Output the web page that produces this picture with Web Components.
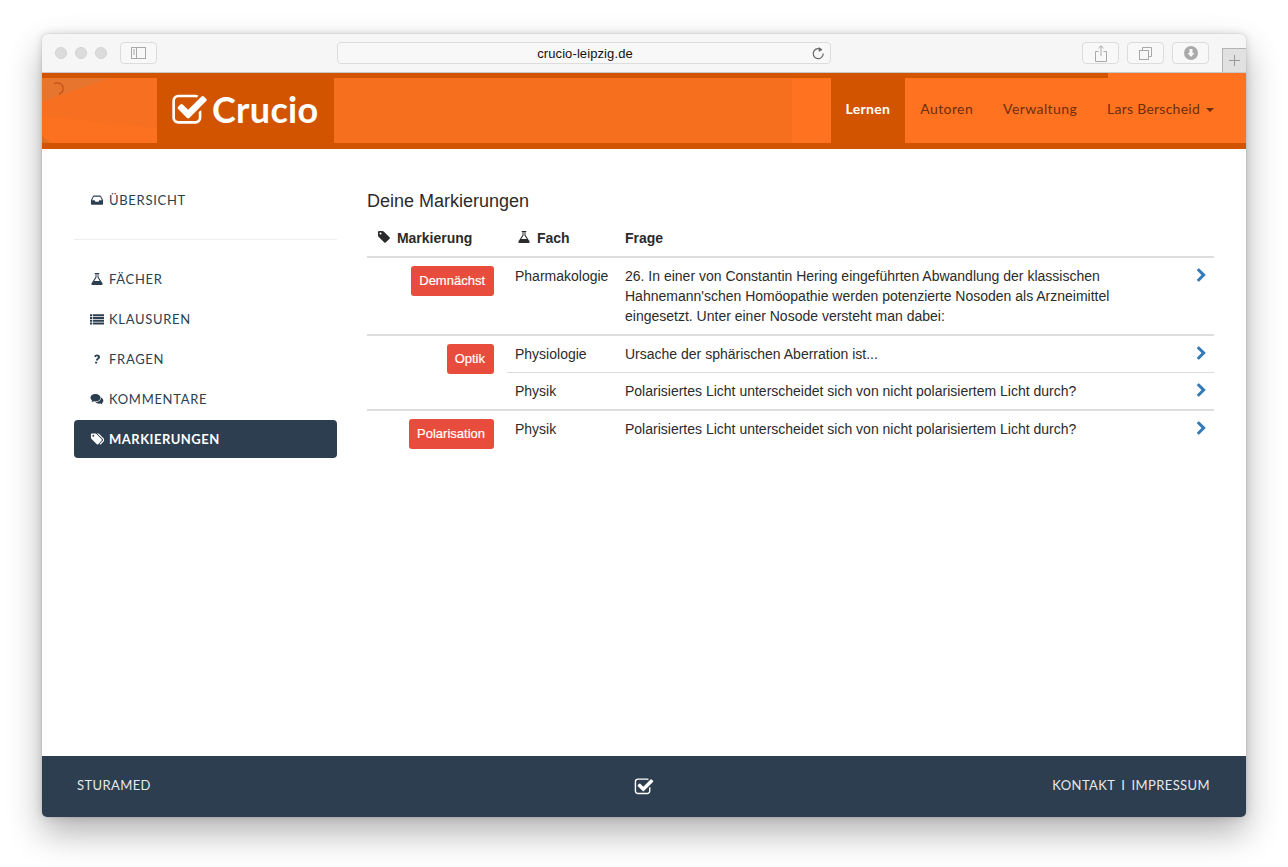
<!DOCTYPE html>
<html lang="de">
<head>
<meta charset="utf-8">
<title>Crucio</title>
<style>
html, body { margin: 0; background: #fff; }
body { padding: 34px 42px 50px; font-family: "Liberation Sans", Arial, sans-serif; }
</style>
</head>
<body>
<app-window>
    <browser-bar slot="bar">crucio-leipzig.de</browser-bar>
    <site-header slot="header"></site-header>
    <side-nav slot="side">
        <nav-item icon="inbox">Übersicht</nav-item>
        <nav-item divider></nav-item>
        <nav-item icon="flask">Fächer</nav-item>
        <nav-item icon="list">Klausuren</nav-item>
        <nav-item icon="question">Fragen</nav-item>
        <nav-item icon="comments">Kommentare</nav-item>
        <nav-item icon="tags" active>Markierungen</nav-item>
    </side-nav>
    <marks-table slot="main"></marks-table>
    <site-footer slot="footer"></site-footer>
</app-window>

<script>
const ICONS = {
    check: [1792, "M1472 930v318q0 119-84.5 203.5t-203.5 84.5h-832q-119 0-203.5-84.5t-84.5-203.5v-832q0-119 84.5-203.5t203.5-84.5h832q63 0 117 25 15 7 18 23 3 17-9 29l-49 49q-10 10-23 10-3 0-9-2-23-6-45-6h-832q-66 0-113 47t-47 113v832q0 66 47 113t113 47h832q66 0 113-47t47-113v-254q0-13 9-22l64-64q10-10 23-10 6 0 12 3 20 8 20 29zm231-489l-814 814q-24 24-57 24t-57-24l-430-430q-24-24-24-57t24-57l110-110q24-24 57-24t57 24l263 263 647-647q24-24 57-24t57 24l110 110q24 24 24 57t-24 57z"],
    chevron: [1792, "M1363 877l-742 742q-19 19-45 19t-45-19l-166-166q-19-19-19-45t19-45l531-531-531-531q-19-19-19-45t19-45l166-166q19-19 45-19t45 19l742 742q19 19 19 45t-19 45z"],
    tag: [1792, "M576 448q0-53-37.5-90.5t-90.5-37.5-90.5 37.5-37.5 90.5 37.5 90.5 90.5 37.5 90.5-37.5 37.5-90.5zm1067 576q0 53-37 90l-491 492q-39 37-91 37-53 0-90-37l-715-716q-38-37-64.5-101t-26.5-117v-416q0-52 38-90t90-38h416q53 0 117 26.5t102 64.5l715 714q37 39 37 91z"],
    tags: [1920, "M576 448q0-53-37.5-90.5t-90.5-37.5-90.5 37.5-37.5 90.5 37.5 90.5 90.5 37.5 90.5-37.5 37.5-90.5zm1067 576q0 53-37 90l-491 492q-39 37-91 37-53 0-90-37l-715-716q-38-37-64.5-101t-26.5-117v-416q0-52 38-90t90-38h416q53 0 117 26.5t102 64.5l715 714q37 39 37 91zm384 0q0 53-37 90l-491 492q-39 37-91 37-36 0-59-14t-53-45l470-470q37-37 37-90 0-52-37-91l-715-714q-38-38-102-64.5t-117-26.5h224q53 0 117 26.5t102 64.5l715 714q37 39 37 91z"],
    flask: [1792, "M1591 1448q56 89 21.5 152.5t-140.5 63.5h-1152q-106 0-140.5-63.5t21.5-152.5l503-793v-399h-64q-26 0-45-19t-19-45 19-45 45-19h512q26 0 45 19t19 45-19 45-45 19h-64v399zm-779-725l-272 429h712l-272-429-20-31v-437h-128v437z"],
    list: [1792, "M0 290h290v250h-290zM390 290h1402v250h-1402zM0 640h290v250h-290zM390 640h1402v250h-1402zM0 990h290v250h-290zM390 990h1402v250h-1402zM0 1340h290v250h-290zM390 1340h1402v250h-1402z"],
    inbox: [1792, "M480 320h832q60 0 90 50l262 520q8 20 8 60v416q0 60-44 104t-100 44h-1264q-56 0-100-44t-44-104v-416q0-40 8-60l262-520q30-50 90-50zm0 160l-216 448h336l96 192h400l96-192h336l-216-448z"],
    question: [1792, "M520 560q90-240 390-240 150 0 260 90t110 230q0 130-100 220l-110 90q-60 50-60 130h-240q0-150 100-240l90-80q50-50 50-110 0-60-40-90t-90-30q-110 0-150 130zM660 1240h260v240h-260z"],
    comments: [1792, "M704 256c-344 0-640 200-640 480 0 150 90 280 220 370-20 70-60 130-110 190 110-10 230-60 310-120 70 20 140 30 220 30 344 0 640-200 640-470s-296-480-640-480zM1400 700c40 310-290 560-690 590 90 130 270 210 470 210 50 0 100-10 150-20 70 60 180 110 290 120-40-50-80-110-100-170 120-80 190-200 190-320 0-180-130-330-310-410z"]
};

class FaIcon extends HTMLElement {
    connectedCallback() {
        const [w, d] = ICONS[this.getAttribute("name")];
        const size = this.getAttribute("size") || "14";
        const root = this.shadowRoot || this.attachShadow({ mode: "open" });
        root.innerHTML = `
<style>
:host { display: inline-flex; align-items: center; justify-content: center; }
svg { display: block; fill: currentColor; }
</style>
<svg width="${size * w / 1792}" height="${size}" viewBox="0 0 ${w} 1792"><path d="${d}"/></svg>`;
    }
}

class AppWindow extends HTMLElement {
    constructor() {
        super();
        this.attachShadow({ mode: "open" }).innerHTML = `
<style>
:host {
    display: flex;
    flex-direction: column;
    height: 783px;
    background: #fff;
    border-radius: 6px 6px 5px 5px;
    box-shadow: 0 16px 34px rgba(0,0,0,.3), 0 0 8px rgba(0,0,0,.14), 0 0 1px rgba(0,0,0,.4);
    overflow: hidden;
}
#body { flex: 1; display: flex; min-height: 0; }
#side { width: 263px; padding: 32px 0 0 32px; flex: none; }
#main { flex: 1; padding: 32px 32px 0 30px; min-width: 0; }
</style>
<slot name="bar"></slot>
<slot name="header"></slot>
<div id="body">
    <div id="side"><slot name="side"></slot></div>
    <div id="main"><slot name="main"></slot></div>
</div>
<slot name="footer"></slot>`;
    }
}

class BrowserBar extends HTMLElement {
    constructor() {
        super();
        this.attachShadow({ mode: "open" }).innerHTML = `
<style>
:host {
    display: flex;
    align-items: flex-start;
    position: relative;
    height: 38px;
    background: #f6f6f6;
    border-bottom: 1px solid #c9c9c9;
    box-sizing: content-box;
    font: 13px "Liberation Sans", Arial, sans-serif;
    letter-spacing: .1px;
    color: #111;
}
.dots { display: flex; gap: 8px; margin: 13px 0 0 13px; }
.dots i { width: 12px; height: 12px; border-radius: 50%; background: #dcdcdc; border: 1px solid #d2d2d2; box-sizing: border-box; }
.btn, .url {
    box-sizing: border-box;
    height: 22px;
    margin-top: 8px;
    border: 1px solid #dcdcdc;
    border-radius: 4px;
    background: #f8f8f8;
    display: flex;
    align-items: center;
    justify-content: center;
}
.btn { width: 37px; color: #a9a9a9; }
.side { margin-left: 13px; }
.url { width: 494px; margin-left: 180px; padding-left: 2px; position: relative; }
.url svg { position: absolute; right: 5px; top: 3px; }
.tools { display: flex; gap: 8px; margin-left: 251px; }
.plus {
    position: absolute;
    right: 0;
    bottom: 0;
    width: 24px;
    height: 24px;
    box-sizing: border-box;
    background: #e1e1e1;
    border: 1px solid #b4b4b4;
    border-width: 1px 0 0 1px;
    display: flex;
    align-items: center;
    justify-content: center;
}
svg { display: block; fill: none; stroke: currentColor; }
</style>
<div class="dots"><i></i><i></i><i></i></div>
<div class="btn side">
    <svg width="15" height="12" viewBox="0 0 15 12"><rect x=".5" y=".5" width="14" height="11"/><path d="M5.500 .5v11M2 3h2M2 5h2M2 7h2" stroke-width="1"/></svg>
</div>
<div class="url">
    <slot></slot>
    <svg width="14" height="15" viewBox="0 0 14 15" style="color:#666"><path d="M10.800 4.200a5 5 0 1 0 1.400 3.400" stroke-width="1.200"/><path d="M7.500 1l3.800 2.600-3.400 2.400z" fill="currentColor" stroke="none"/></svg>
</div>
<div class="tools">
    <div class="btn"><svg width="12" height="17" viewBox="0 0 12 17"><path d="M3.500 6.500h-3v10h11v-10h-3M6 11V1M3.500 3.200L6 .8l2.500 2.400"/></svg></div>
    <div class="btn"><svg width="13" height="13" viewBox="0 0 13 13"><rect x=".5" y="3.500" width="9" height="9"/><path d="M3.500 3V.5h9v9H10"/></svg></div>
    <div class="btn"><svg width="14" height="14" viewBox="0 0 14 14"><circle cx="7" cy="7" r="7" fill="currentColor" stroke="none"/><path d="M5.500 3h3v4h2L7 11 3.500 7h2z" fill="#f8f8f8" stroke="none"/></svg></div>
</div>
<div class="plus"><svg width="11" height="11" viewBox="0 0 11 11" style="color:#999"><path d="M5.500 0v11M0 5.500h11"/></svg></div>`;
    }
}

class SiteHeader extends HTMLElement {
    constructor() {
        super();
        this.attachShadow({ mode: "open" }).innerHTML = `
<style>
:host {
    display: block;
    position: relative;
    height: 76px;
    background: #d35400;
    font-family: Lato, sans-serif;
}
#progress { position: absolute; left: 1066px; right: 0; top: 0; height: 5px; background: #ff7320; }
#band {
    display: flex;
    height: 65px;
    position: relative;
    top: 5px;
    background: #f76f20;
}
#deco { width: 115px; flex: none; display: block; }
#logo {
    width: 177px;
    flex: none;
    background: #d35400;
    color: #fff;
    display: flex;
    align-items: center;
    gap: 4px;
    padding-left: 14px;
    box-sizing: border-box;
    font-size: 36px;
    font-weight: 700;
    letter-spacing: .3px;
}
#logo span { margin-bottom: 4px; }
#fill { flex: 1; background: linear-gradient(90deg, #f66f1f 0, #f66f1f 458px, #ff7320 458px); }
nav { display: flex; background: #ff7320; font-size: 14px; letter-spacing: .4px; }
nav a { padding: 0 15px; line-height: 62px; color: #6e2d0c; white-space: nowrap; }
nav a.on { background: #d35400; color: #fff; font-weight: 700; letter-spacing: .3px; }
nav a.me { letter-spacing: .25px; }
#caret { display: inline-block; margin-left: 6px; border: 4px solid transparent; border-top-color: #6e2d0c; border-bottom: 0; vertical-align: middle; }
#end { width: 17px; background: #ff7320; flex: none; }
</style>
<div id="progress"></div>
<div id="band">
    <svg id="deco" viewBox="0 0 115 65" preserveAspectRatio="none">
        <rect width="115" height="65" fill="#f76f20"/>
        <path d="M0 0H68L0 24z" fill="#e8752e"/>
        <path d="M0 38L115 50V65H0z" fill="#fb7120"/>
        <path d="M0 58L8 65H0z" fill="#d9702a"/>
        <path d="M12 6a5.500 5.500 0 0 1 9 4.500 5.500 5.500 0 0 1-4 5.500" fill="none" stroke="#c9541a" stroke-width="1.500"/>
    </svg>
    <div id="logo"><fa-icon name="check" size="37"></fa-icon><span>Crucio</span></div>
    <div id="fill"></div>
    <nav>
        <a class="on">Lernen</a>
        <a>Autoren</a>
        <a>Verwaltung</a>
        <a class="me">Lars Berscheid<span id="caret"></span></a>
    </nav>
    <div id="end"></div>
</div>`;
    }
}

class SideNav extends HTMLElement {
    constructor() {
        super();
        this.attachShadow({ mode: "open" }).innerHTML = `
<style>
:host { display: block; font-family: Lato, sans-serif; }
</style>
<slot></slot>`;
    }
}

class NavItem extends HTMLElement {
    connectedCallback() {
        const root = this.shadowRoot || this.attachShadow({ mode: "open" });
        if (this.hasAttribute("divider")) {
            root.innerHTML = `
<style>:host { display: block; height: 1px; margin: 20px 0 20px; background: #eee; }</style>`;
            return;
        }
        const active = this.hasAttribute("active");
        root.innerHTML = `
<style>
:host {
    display: flex;
    align-items: center;
    height: 38px;
    margin-bottom: 2px;
    padding-left: 16px;
    border-radius: 4px;
    font-size: 13px;
    letter-spacing: .7px;
    text-transform: uppercase;
    color: #2c3e50;
    background: ${active ? "#2c3e50" : "transparent"};
    ${active ? "color: #fff; font-weight: 700; letter-spacing: .5px;" : ""}
}
fa-icon { width: 14px; margin-right: 5px; }
</style>
<fa-icon name="${this.getAttribute("icon")}" size="14"></fa-icon>
<slot></slot>`;
    }
}

class MarkTag extends HTMLElement {
    constructor() {
        super();
        this.attachShadow({ mode: "open" }).innerHTML = `
<style>
:host {
    display: inline-block;
    height: 30px;
    line-height: 30px;
    padding: 0 9px 0 8px;
    border-radius: 3px;
    background: #e74c3c;
    color: #fff;
    font-size: 13px;
    -webkit-text-stroke: .2px #fff;
}
</style>
<slot></slot>`;
    }
}

const ROWS = [
    { tag: "Demnächst", span: 1, subject: "Pharmakologie", question: "26. In einer von Constantin Hering eingeführten Abwandlung der klassischen Hahnemann'schen Homöopathie werden potenzierte Nosoden als Arzneimittel eingesetzt. Unter einer Nosode versteht man dabei:" },
    { tag: "Optik", span: 2, subject: "Physiologie", question: "Ursache der sphärischen Aberration ist..." },
    { subject: "Physik", question: "Polarisiertes Licht unterscheidet sich von nicht polarisiertem Licht durch?", sub: true },
    { tag: "Polarisation", span: 1, subject: "Physik", question: "Polarisiertes Licht unterscheidet sich von nicht polarisiertem Licht durch?" }
];

class MarksTable extends HTMLElement {
    constructor() {
        super();
        const rows = ROWS.map((r, i) => `
<tr class="${r.sub ? "sub" : i ? "group" : ""}">
    ${r.tag ? `<td class="tag" rowspan="${r.span}"><mark-tag>${r.tag}</mark-tag></td>` : ""}
    <td class="subject">${r.subject}</td>
    <td class="question">${r.question}</td>
    <td class="go"><fa-icon name="chevron" size="15"></fa-icon></td>
</tr>`).join("");
        this.attachShadow({ mode: "open" }).innerHTML = `
<style>
:host { display: block; color: #2b2b2b; font-size: 14px; line-height: 20px; }
h4 { margin: 10px 0 0; font-size: 18px; font-weight: 400; line-height: 20px; height: 37px; }
table { width: 100%; border-collapse: separate; border-spacing: 0; table-layout: fixed; }
th { text-align: left; font-weight: 700; padding: 0 8px 8px; height: 20px; border-bottom: 2px solid #ddd; }
th fa-icon { vertical-align: -1px; margin-right: 2px; }
td { padding: 8px; vertical-align: top; }
tr.group td { border-top: 2px solid #ddd; }
tr.sub td { border-top: 1px solid #ddd; }
td.tag { text-align: right; padding: 8px 13px 0 0; line-height: 0; }
td.go { padding: 10px 5px 0 0; text-align: right; color: #337ab7; line-height: 0; }
th.m { padding-left: 10px; }
th.f { padding-left: 10px; }
</style>
<h4>Deine Markierungen</h4>
<table>
    <colgroup><col style="width:140px"><col style="width:110px"><col><col style="width:50px"></colgroup>
    <thead>
        <tr>
            <th class="m"><fa-icon name="tag" size="14"></fa-icon> Markierung</th>
            <th class="f"><fa-icon name="flask" size="14"></fa-icon> Fach</th>
            <th>Frage</th>
            <th></th>
        </tr>
    </thead>
    <tbody>${rows}</tbody>
</table>`;
    }
}

class SiteFooter extends HTMLElement {
    constructor() {
        super();
        this.attachShadow({ mode: "open" }).innerHTML = `
<style>
:host {
    display: grid;
    grid-template-columns: 1fr auto 1fr;
    align-items: center;
    height: 61px;
    padding: 0 36px 0 35px;
    background: #2c3e50;
    color: #e8e8e8;
    font: 13px Lato, sans-serif;
    letter-spacing: .4px;
    text-transform: uppercase;
}
.t { margin-top: -3px; }
.r { text-align: right; }
.r b { font-weight: 400; padding: 0 2.5px; }
fa-icon { color: #fff; }
</style>
<div class="t">Sturamed</div>
<fa-icon name="check" size="20"></fa-icon>
<div class="t r">Kontakt <b>I</b> Impressum</div>`;
    }
}

customElements.define("fa-icon", FaIcon);
customElements.define("app-window", AppWindow);
customElements.define("browser-bar", BrowserBar);
customElements.define("site-header", SiteHeader);
customElements.define("side-nav", SideNav);
customElements.define("nav-item", NavItem);
customElements.define("mark-tag", MarkTag);
customElements.define("marks-table", MarksTable);
customElements.define("site-footer", SiteFooter);
</script>
</body>
</html>
